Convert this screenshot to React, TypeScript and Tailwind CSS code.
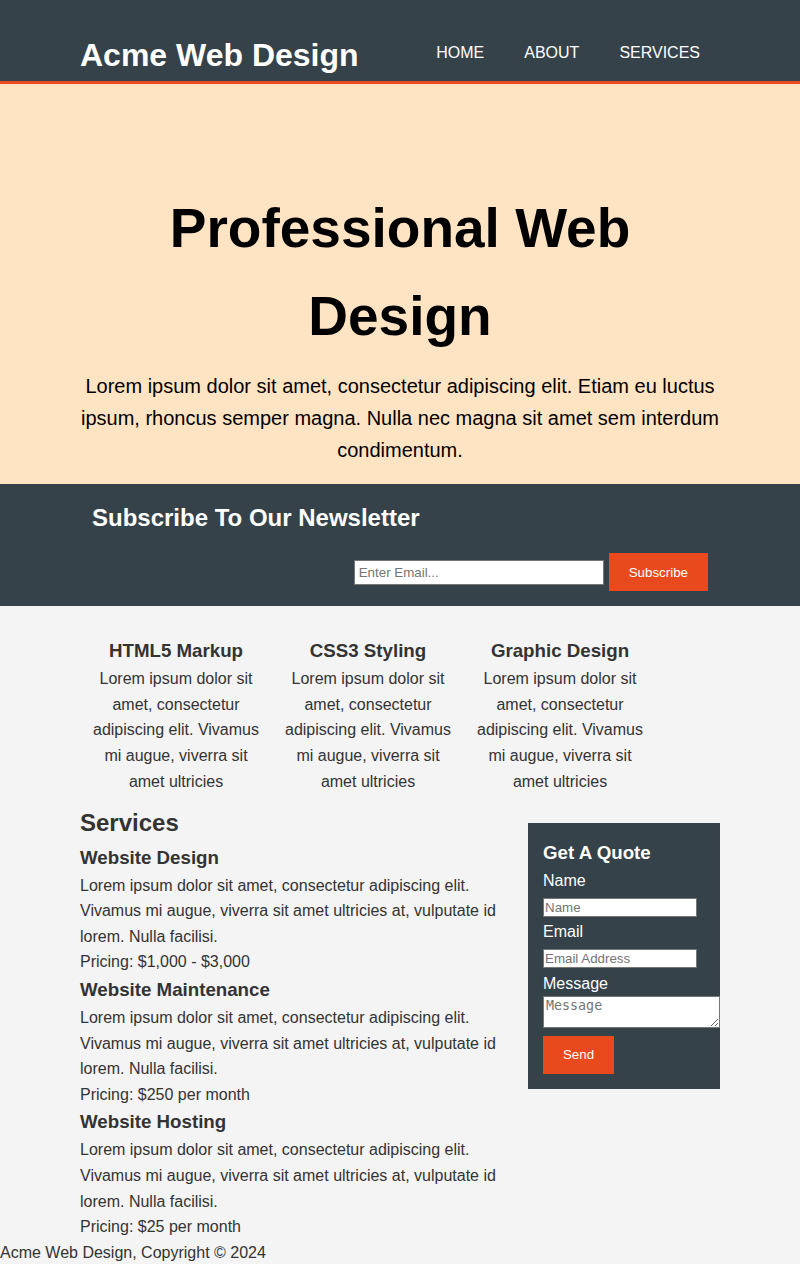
import React from "react";

const lorem =
  "Lorem ipsum dolor sit amet, consectetur adipiscing elit. Vivamus mi augue, viverra sit amet ultricies at, vulputate id lorem. Nulla facilisi.";

const boxes = ["HTML5 Markup", "CSS3 Styling", "Graphic Design"];

const services = [
  { title: "Website Design", price: "Pricing: $1,000 - $3,000" },
  { title: "Website Maintenance", price: "Pricing: $250 per month" },
  { title: "Website Hosting", price: "Pricing: $25 per month" },
];

export default function App() {
  return (
    <div
      className="min-h-[1264px] bg-[#f4f4f4] text-[#333] text-[16px] leading-[1.6]"
      style={{ fontFamily: '"Liberation Sans", Arial, sans-serif' }}
    >
      {/* Header */}
      <header className="bg-[#35424a] pt-[30px] border-b-[3px] border-[#e8491d] text-white">
        <div className="w-[640px] mx-auto flex justify-between">
          <h1 className="text-[32px] font-bold leading-[51.2px] m-0">Acme Web Design</h1>
          <nav className="mt-[10px]">
            <ul className="flex">
              <li className="px-[20px] uppercase text-[16px] leading-[25.6px]">Home</li>
              <li className="px-[20px] uppercase text-[16px] leading-[25.6px]">About</li>
              <li className="px-[20px] uppercase text-[16px] leading-[25.6px]">Services</li>
            </ul>
          </nav>
        </div>
      </header>

      {/* Showcase */}
      <section className="h-[400px] bg-[#ffe4c4] text-black text-center">
        <div className="w-[640px] mx-auto pt-[100px]">
          <h1 className="text-[55px] font-bold leading-[88px] mb-[10px]">Professional Web Design</h1>
          <p className="text-[20px] leading-[32px]">
            Lorem ipsum dolor sit amet, consectetur adipiscing elit. Etiam eu luctus ipsum, rhoncus semper magna. Nulla nec magna sit amet sem interdum condimentum.
          </p>
        </div>
      </section>

      {/* Newsletter */}
      <section className="bg-[#35424a] text-white pt-[15px] pb-[15px]">
        <div className="w-[640px] mx-auto px-[12px]">
          <h1 className="text-[24px] font-bold leading-[38px]">Subscribe To Our Newsletter</h1>
          <form className="flex justify-end items-center gap-[5px] mt-[16px]">
            <input
              type="email"
              placeholder="Enter Email..."
              className="w-[250px] h-[25px] px-[4px] bg-white border border-[#767676] text-[13.33px] text-black placeholder:text-[#757575] outline-none"
            />
            <button
              type="button"
              className="h-[38px] px-[20px] bg-[#e8491d] text-white text-[13.33px]"
            >
              Subscribe
            </button>
          </form>
        </div>
      </section>

      {/* Boxes */}
      <section className="w-[640px] mx-auto flex mt-[20px]">
        {boxes.map((b) => (
          <div key={b} className="w-[192px] p-[10px] text-center">
            <h3 className="text-[18.72px] font-bold leading-[30px]">{b}</h3>
            <p className="leading-[25.6px]">
              Lorem ipsum dolor sit amet, consectetur adipiscing elit. Vivamus mi augue, viverra sit amet ultricies
            </p>
          </div>
        ))}
      </section>

      {/* Services */}
      <section className="w-[640px] mx-auto flex items-start">
        <article className="w-[416px]">
          <h1 className="text-[24px] font-bold leading-[38.4px]">Services</h1>
          {services.map((s) => (
            <div key={s.title}>
              <h3 className="text-[18.72px] font-bold leading-[30px]">{s.title}</h3>
              <p className="leading-[25.6px]">{lorem}</p>
              <p className="leading-[25.6px]">{s.price}</p>
            </div>
          ))}
        </article>
        <aside className="w-[192px] ml-auto mt-[19px]">
          <div className="bg-[#35424a] text-white p-[15px]">
            <h3 className="text-[18.72px] font-bold leading-[30px]">Get A Quote</h3>
            <form>
              <div className="leading-[25.6px]">Name</div>
              <div className="h-[25.6px] pt-[4.4px]">
                <input
                  type="text"
                  placeholder="Name"
                  className="block w-[154px] h-[19px] px-[1px] bg-white border border-[#767676] text-[13.33px] text-black placeholder:text-[#757575] outline-none"
                />
              </div>
              <div className="leading-[25.6px]">Email</div>
              <div className="h-[25.6px] pt-[4.4px]">
                <input
                  type="email"
                  placeholder="Email Address"
                  className="block w-[154px] h-[19px] px-[1px] bg-white border border-[#767676] text-[13.33px] text-black placeholder:text-[#757575] outline-none"
                />
              </div>
              <div className="leading-[25.6px]">Message</div>
              <textarea
                placeholder="Message"
                className="block w-[177px] h-[32px] px-[2px] py-[1px] bg-white border border-[#767676] text-[13.33px] leading-[15px] text-black placeholder:text-[#757575] outline-none"
                style={{ fontFamily: '"DejaVu Sans Mono", monospace' }}
              />
              <button
                type="button"
                className="block mt-[8px] h-[38px] w-[71px] bg-[#e8491d] text-white text-[13.33px]"
              >
                Send
              </button>
            </form>
          </div>
        </aside>
      </section>

      {/* Footer */}
      <footer>
        <p className="leading-[25.6px]">Acme Web Design, Copyright © 2024</p>
      </footer>
    </div>
  );
}
